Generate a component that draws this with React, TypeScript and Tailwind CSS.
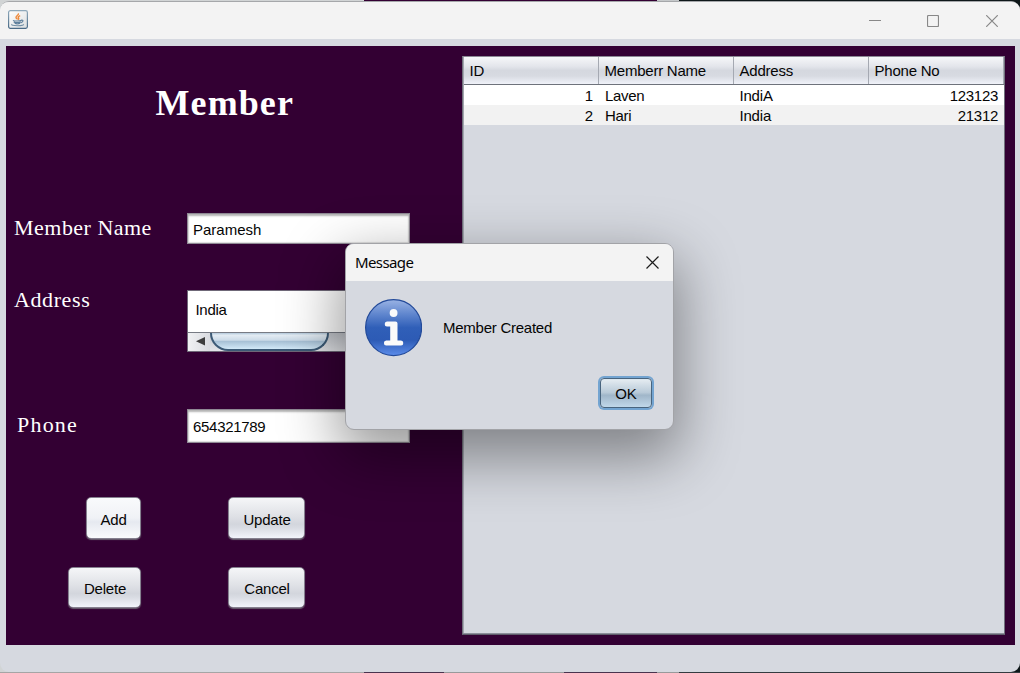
import type { ReactNode } from "react";

const rows = [
  { id: 1, name: "Laven", address: "IndiA", phone: "123123" },
  { id: 2, name: "Hari", address: "India", phone: "21312" },
];

const headers = ["ID", "Memberr Name", "Address", "Phone No"];

function JavaIcon() {
  return (
    <svg width="20" height="20" viewBox="0 0 20 20" className="-mt-px">
      <defs>
        <linearGradient id="jb" x1="0" y1="0" x2="0" y2="1">
          <stop offset="0" stopColor="#8fa9bb" />
          <stop offset="1" stopColor="#4a6b87" />
        </linearGradient>
        <linearGradient id="jf" x1="0" y1="0" x2="1" y2="1">
          <stop offset="0" stopColor="#ffffff" />
          <stop offset="1" stopColor="#dcdfe0" />
        </linearGradient>
      </defs>
      <rect x="0.6" y="0.6" width="18.8" height="17.8" rx="1.8" fill="url(#jf)" stroke="url(#jb)" strokeWidth="1.2" />
      <path d="M10.300 3.300c1 1.600-2.700 2.500-2.300 4.200.2.9 1.300 1 1.400 2M12.200 5.600c-1.800.7-2.500 1.500-1.700 2.400.5.7.200 1.100-.5 1.600" fill="none" stroke="#ef8a3c" strokeWidth="1.4" />
      <path d="M5 10.400c1.400.8 6.600.8 8.400 0M5.800 11.900c1.500 1 5.500 1 7 .1M6.700 13.300c1.300.7 4 .7 5.500 0M13.300 10.200c2.300-.4 2.200 1.800-.4 2.500" fill="none" stroke="#5f809c" strokeWidth="1.2" />
      <path d="M4.200 14.200c-1.600.9 1 1.600 5.400 1.600s6.800-.8 5.300-1.600" fill="none" stroke="#7390a6" strokeWidth="1.1" />
    </svg>
  );
}

function InfoIcon() {
  return (
    <svg width="58" height="58" viewBox="0 0 58 58">
      <defs>
        <linearGradient id="info" x1="0" y1="0" x2="0" y2="1">
          <stop offset="0" stopColor="#9ab3e4" />
          <stop offset="0.25" stopColor="#6288cf" />
          <stop offset="0.5" stopColor="#305fb8" />
          <stop offset="0.72" stopColor="#2d5bb5" />
          <stop offset="1" stopColor="#5b8cea" />
        </linearGradient>
      </defs>
      <circle cx="29.600" cy="28.600" r="28" fill="url(#info)" stroke="#234a99" strokeWidth="1.2" />
      <circle cx="29.600" cy="14" r="3.900" fill="#fafafa" />
      <path d="M23 22.600h8.500q2 0 2 2v16.900h3.500q2.300 0 2.300 2.500t-2.300 2.500H22.200q-2.300 0-2.300-2.500t2.300-2.500h4V27.600h-3.200q-2.300 0-2.300-2.500t2.300-2.500z" fill="#fafafa" />
    </svg>
  );
}

function Label({ children, className }: { children: ReactNode; className: string }) {
  return <div className={`shrink-0 font-['Liberation_Serif',serif] text-[22px] leading-[26px] whitespace-nowrap text-white ${className}`}>{children}</div>;
}

function Field({ value, className }: { value: string; className: string }) {
  return (
    <div className={`flex w-[223px] items-center border border-[#8f8994] bg-white pl-[5px] shadow-[inset_0_2px_2px_#b5b5b5,inset_0_0_1px_1px_#dedede] ${className}`}>
      {value}
    </div>
  );
}

function Button({ children, className, light = false }: { children: ReactNode; className: string; light?: boolean }) {
  const fill = light
    ? "bg-[linear-gradient(#f9fafc,#f0f2f6_50%,#e6e9f0_60%,#fafbfd)]"
    : "bg-[linear-gradient(#f5f6f8,#dfe1e6_45%,#d3d6dd_65%,#d9dce3_75%,#f2f4fb)]";
  return (
    <button className={`flex items-center justify-center rounded-[5px] border border-[#85808f] pt-[3px] tracking-[-0.2px] shadow-[0_1px_1px_#6b6270] ${fill} ${className}`}>
      {children}
    </button>
  );
}

function MemberForm() {
  return (
    <section className="w-[456px] shrink-0">
      <h1 className="pt-[36px] pl-[149.500px] font-['Liberation_Serif',serif] text-[36px] leading-[42px] font-bold tracking-[1.1px] text-white">Member</h1>
      <div className="mt-[89px] flex h-[31px]">
        <Label className="w-[181px] pt-[2px] pl-[8px] tracking-[0.48px]">Member Name</Label>
        <Field value="Paramesh" className="h-[31px] pt-[2px]" />
      </div>
      <div className="mt-[46px] flex h-[62px]">
        <Label className="-mt-[3px] w-[181px] pl-[8px] tracking-[0.6px]">Address</Label>
        <div className="flex h-[62px] w-[223px] flex-col border border-[#6f6878] bg-white">
          <div className="h-[42px] border-b border-[#777b84] pt-[10px] pl-[7.500px] leading-[17px] tracking-[-0.3px]">India</div>
          <div className="flex flex-1 bg-gradient-to-b from-[#c1c4ca] to-[#e4e6ea]">
            <div className="flex w-[22px] items-center justify-center bg-gradient-to-r from-[#f0f1f3] to-[#d9dbe0]">
              <svg width="9" height="9" viewBox="0 0 9 9" className="-mt-px ml-[2px]"><path d="M9 0v8.500L0 4.250z" fill="#3d3d3d" /></svg>
            </div>
            <div className="h-[18px] w-[119px] rounded-b-[18px] border-2 border-t-0 border-[#3c5a76] bg-[linear-gradient(#b3c9dc,#e3ecf3_14%,#ccdbe8_45%,#a7c0d5_52%,#d2e9f8)]" />
          </div>
        </div>
      </div>
      <div className="mt-[57px] flex h-[34px]">
        <Label className="w-[181px] pt-[3px] pl-[11px] tracking-[1.2px]">Phone</Label>
        <Field value="654321789" className="h-[34px] pt-[2px] tracking-[-0.3px]" />
      </div>
      <div className="mt-[54px] grid w-[299px] grid-cols-[135px_77px] justify-between gap-y-[28px]">
        <Button light className="h-[42px] w-[55px] justify-self-end">Add</Button>
        <Button className="h-[42px] w-[77px] pl-px">Update</Button>
        <Button className="h-[41px] w-[73px] justify-self-end pl-px">Delete</Button>
        <Button className="h-[41px] w-[77px] pl-px">Cancel</Button>
      </div>
    </section>
  );
}

function MemberTable() {
  return (
    <section className="mt-[10px] h-[579px] w-[543px] border border-t-[#8b8894] border-r-[#71717d] border-b-[#605d6b] border-l-[#71717d] bg-[#d6d9e0] shadow-[inset_0_-1px_#8b8e99,inset_1px_0_#a4a7af]">
      <div className="ml-px grid h-[28px] grid-cols-[135px_135px_135px_1fr] border-b border-[#6e727b] bg-[linear-gradient(#f6f7f9,#e3e5eb_35%,#d5d8df_50%,#d7dae1_70%,#f0f2f9)]">
        {headers.map((header) => (
          <div key={header} className="border-r border-[#a5a9b2] pt-[5px] pl-[5.600px] leading-[18px] tracking-[-0.24px]">{header}</div>
        ))}
      </div>
      {rows.map((row) => (
        <div key={row.id} className="ml-px grid h-5 grid-cols-[135px_135px_135px_1fr] pt-[2px] leading-[18px] even:bg-white odd:bg-[#f2f2f2]">
          <div className="pr-[6px] text-right">{row.id}</div>
          <div className="pl-[6px] tracking-[-0.3px]">{row.name}</div>
          <div className="pl-[5.500px] tracking-[-0.2px]">{row.address}</div>
          <div className="pr-[6px] text-right tracking-[-0.3px]">{row.phone}</div>
        </div>
      ))}
    </section>
  );
}

function MessageDialog() {
  return (
    <div role="dialog" className="absolute top-[243px] left-[345px] flex h-[187px] w-[329px] flex-col overflow-hidden rounded-[9px] border border-[#a2a3a7] bg-[#d6d9e0] shadow-[0_22px_58px_6px_rgba(0,0,0,0.4)]">
      <div className="flex h-[37px] items-center justify-between bg-[#f3f3f3] pr-[14px] pl-[9px] font-['Noto_Sans',sans-serif] text-[15px]">
        <span className="-mt-[2px] tracking-[-0.6px]">Message</span>
        <svg width="13" height="13" viewBox="0 0 13 13"><path d="M.5.5l12 12M12.500.500l-12 12" stroke="#1c1c1c" strokeWidth="1.200" /></svg>
      </div>
      <div className="flex pt-[18px] pl-[18px]">
        <InfoIcon />
        <span className="pt-[20px] pl-[21px] leading-[18px] tracking-[-0.25px]">Member Created</span>
      </div>
      <button className="mt-[21px] ml-[254px] flex h-[30px] w-[52px] items-center justify-center rounded-[4px] border border-[#48647e] bg-[linear-gradient(#e6edf2,#b9cad8_48%,#a0b6c9_58%,#c0d7e9)] pt-[1px] shadow-[0_0_0_2px_#73a4d1,inset_0_1px_#dce7ef]">OK</button>
    </div>
  );
}

export default function App() {
  return (
    <div className="relative flex h-[673px] w-[1020px] flex-col overflow-hidden bg-[linear-gradient(90deg,#d1d4d5_364px,#330033_364px,#330033_657px,#c5c8ca_657px,#c5c8ca_679px,#0e1719_679px)] font-['Liberation_Sans',sans-serif] text-[15px] leading-[18px] text-[#050505]">
      <div className="mt-px flex h-[671px] flex-col overflow-hidden rounded-[9px] border-t border-[#a5a7aa] bg-[#d6d9e0]">
        <header className="flex h-[37px] shrink-0 items-center justify-between bg-[#f3f3f3] pr-[22px] pl-[8px]">
          <JavaIcon />
          <div className="flex items-center text-[#888]">
            <svg width="12" height="12" viewBox="0 0 12 12" className="mr-[46px]"><path d="M0 5.500h12" stroke="currentColor" /></svg>
            <svg width="12" height="12" viewBox="0 0 12 12" className="mr-[47px]"><rect x=".5" y=".5" width="11" height="11" rx="1" fill="none" stroke="currentColor" strokeWidth="1.200" /></svg>
            <svg width="12" height="12" viewBox="0 0 12 12"><path d="M.2.200l11.600 11.600M11.800.200L.2 11.800" stroke="currentColor" strokeWidth="1.200" /></svg>
          </div>
        </header>
        <main className="mt-[7px] ml-[6px] flex h-[599px] w-[1009px] shrink-0 bg-[#330033]">
          <MemberForm />
          <MemberTable />
        </main>
      </div>
      <div className="h-px shrink-0 bg-[linear-gradient(90deg,#a5a5a5_364px,#49334e_364px,#49334e_444px,#989a9b_444px,#989a9b_564px,#49334e_564px,#49334e_657px,#989a9b_657px,#989a9b_679px,#343b40_679px)]" />
      <MessageDialog />
    </div>
  );
}
